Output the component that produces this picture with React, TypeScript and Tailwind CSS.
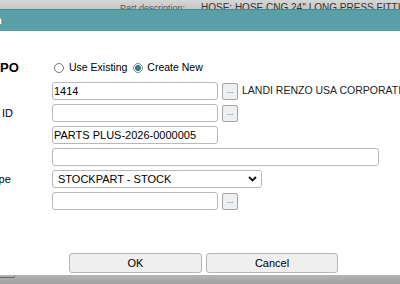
import React from "react";

const font = { fontFamily: '"Liberation Sans", Arial, sans-serif' };

function Dots() {
  return (
    <div className="ml-[4px] flex h-[17px] w-[16px] shrink-0 items-end justify-center rounded-[2px] border border-[#a6a6a6] bg-[#efefef] pb-[4px] text-[8px] leading-none text-[#444]">
      ...
    </div>
  );
}

function Input({ w, value }: { w: string; value?: string }) {
  return (
    <div className={`${w} flex h-[18px] shrink-0 items-center whitespace-nowrap rounded-[3px] border border-[#b9b9b9] bg-white pl-[1px] text-[11px] text-black`}>
      {value}
    </div>
  );
}

function Label({ children, offset }: { children?: React.ReactNode; offset?: string }) {
  return (
    <div className="w-[52px] shrink-0 overflow-hidden whitespace-nowrap text-[11px] text-black">
      <span className={offset}>{children}</span>
    </div>
  );
}

export default function App() {
  return (
    <div className="relative flex h-[284px] w-[400px] flex-col overflow-hidden bg-white" style={font}>
      {/* background page strip */}
      <div className="flex h-[9px] shrink-0 items-start overflow-hidden whitespace-nowrap bg-gradient-to-b from-[#d6d6d6] to-[#c6c6c6] pl-[120px] leading-none">
        <span className="mt-[4px] w-[81px] shrink-0 text-[9px] text-[#555]">Part description:</span>
        <span className="mt-[3px] shrink-0 text-[10px] text-[#333]">HOSE: HOSE CNG 24'' LONG PRESS FITTINGS</span>
      </div>
      {/* dialog title bar */}
      <div className="flex h-[22px] shrink-0 items-center overflow-hidden border-t border-[#3f8c93] bg-[#5b9fa6]">
        <span className="ml-[-5px] text-[11px] font-bold text-white">n</span>
      </div>
      {/* body */}
      <div className="flex flex-1 flex-col bg-white pt-[28px]">
        <div className="flex h-[18px] items-center">
          <div className="w-[54px] shrink-0 overflow-hidden whitespace-nowrap text-[13px] font-bold text-black">PO</div>
          <div className="flex items-center whitespace-nowrap text-[10.5px] text-black">
            <span className="h-[10px] w-[10px] rounded-full border border-[#777] bg-white" />
            <span className="ml-[5px]">Use Existing</span>
            <span className="ml-[6px] flex h-[10px] w-[10px] items-center justify-center rounded-full border border-[#888] bg-white">
              <span className="h-[6px] w-[6px] rounded-full bg-[#2e7d83]" />
            </span>
            <span className="ml-[4px]">Create New</span>
          </div>
        </div>
        <div className="mt-[5px] flex flex-col gap-[4px]">
          <div className="flex h-[18px] items-center">
            <Label />
            <Input w="w-[166px]" value="1414" />
            <Dots />
            <span className="ml-[4px] shrink-0 whitespace-nowrap text-[10.5px] text-[#222]">LANDI RENZO USA CORPORATION</span>
          </div>
          <div className="flex h-[18px] items-center">
            <Label offset="ml-[2px]">ID</Label>
            <Input w="w-[166px]" />
            <Dots />
          </div>
          <div className="flex h-[18px] items-center">
            <Label />
            <Input w="w-[166px]" value="PARTS PLUS-2026-0000005" />
          </div>
          <div className="flex h-[18px] items-center">
            <Label />
            <Input w="w-[327px]" />
          </div>
          <div className="flex h-[18px] items-center">
            <Label offset="ml-[-13px]">Type</Label>
            <div className="flex h-[18px] w-[210px] shrink-0 items-center justify-between rounded-[3px] border border-[#b9b9b9] bg-white pl-[5px] pr-[4px] text-[11px] text-black">
              <span>STOCKPART - STOCK</span>
              <svg width="9" height="6" viewBox="0 0 9 6">
                <path d="M1 1 L4.5 4.5 L8 1" fill="none" stroke="#111" strokeWidth="1.8" />
              </svg>
            </div>
          </div>
          <div className="flex h-[18px] items-center">
            <Label />
            <Input w="w-[166px]" />
            <Dots />
          </div>
        </div>
        <div className="mt-[43px] flex gap-[4px] pl-[69px]">
          <button className="flex h-[20px] w-[133px] items-center justify-center rounded-[3px] border border-[#b5b5b5] bg-[#efefef] text-[11px] text-black">OK</button>
          <button className="flex h-[20px] w-[132px] items-center justify-center rounded-[3px] border border-[#b5b5b5] bg-[#efefef] text-[11px] text-black">Cancel</button>
        </div>
      </div>
      {/* background page strip bottom */}
      <div className="relative h-[9px] shrink-0 bg-gradient-to-b from-[#b4b4b4] to-[#a2a2a2]">
        <div className="absolute left-0 top-[1px] h-[2px] w-[15px] rounded-br-[2px] border-b border-r border-[#666]" />
      </div>
    </div>
  );
}
